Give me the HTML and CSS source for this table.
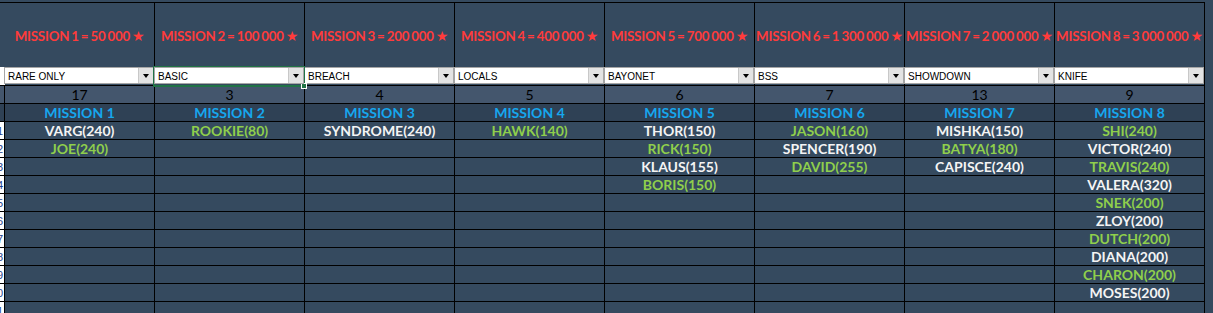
FILE: index.html
```html
<!DOCTYPE html>
<html>
<head>
<meta charset="utf-8">
<link rel="stylesheet" href="styles.css">
</head>
<body>
<div class="sheet">
  <div class="row r-head">
    <div class="rh"></div>
    <div class="cell title">MISSION 1 = 50 000 <span class="star">★</span></div>
    <div class="cell title">MISSION 2 = 100 000 <span class="star">★</span></div>
    <div class="cell title">MISSION 3 = 200 000 <span class="star">★</span></div>
    <div class="cell title">MISSION 4 = 400 000 <span class="star">★</span></div>
    <div class="cell title">MISSION 5 = 700 000 <span class="star">★</span></div>
    <div class="cell title">MISSION 6 = 1 300 000 <span class="star">★</span></div>
    <div class="cell title">MISSION 7 = 2 000 000 <span class="star">★</span></div>
    <div class="cell title">MISSION 8 = 3 000 000 <span class="star">★</span></div>
  </div>
  <div class="row r-drop">
    <div class="rh rh-white"></div>
    <div class="cell"><div class="dd"><span class="dd-text">RARE ONLY</span><span class="dd-btn"></span></div></div>
    <div class="cell selected"><div class="sel"><span class="handle"></span></div><div class="dd"><span class="dd-text">BASIC</span><span class="dd-btn"></span></div></div>
    <div class="cell"><div class="dd"><span class="dd-text">BREACH</span><span class="dd-btn"></span></div></div>
    <div class="cell"><div class="dd"><span class="dd-text">LOCALS</span><span class="dd-btn"></span></div></div>
    <div class="cell"><div class="dd"><span class="dd-text">BAYONET</span><span class="dd-btn"></span></div></div>
    <div class="cell"><div class="dd"><span class="dd-text">BSS</span><span class="dd-btn"></span></div></div>
    <div class="cell"><div class="dd"><span class="dd-text">SHOWDOWN</span><span class="dd-btn"></span></div></div>
    <div class="cell"><div class="dd"><span class="dd-text">KNIFE</span><span class="dd-btn"></span></div></div>
  </div>
  <div class="row r-count">
    <div class="rh"></div>
    <div class="cell">17</div><div class="cell">3</div><div class="cell">4</div><div class="cell">5</div>
    <div class="cell">6</div><div class="cell">7</div><div class="cell">13</div><div class="cell">9</div>
  </div>
  <div class="row r-mission">
    <div class="rh"></div>
    <div class="cell">MISSION 1</div><div class="cell">MISSION 2</div><div class="cell">MISSION 3</div><div class="cell">MISSION 4</div>
    <div class="cell">MISSION 5</div><div class="cell">MISSION 6</div><div class="cell">MISSION 7</div><div class="cell">MISSION 8</div>
  </div>
  <div class="row r-data">
    <div class="rh rh-num"><span>1</span></div>
    <div class="cell w">VARG(240)</div><div class="cell g">ROOKIE(80)</div><div class="cell w">SYNDROME(240)</div><div class="cell g">HAWK(140)</div>
    <div class="cell w">THOR(150)</div><div class="cell g">JASON(160)</div><div class="cell w">MISHKA(150)</div><div class="cell g">SHI(240)</div>
  </div>
  <div class="row r-data">
    <div class="rh rh-num"><span>2</span></div>
    <div class="cell g">JOE(240)</div><div class="cell"></div><div class="cell"></div><div class="cell"></div>
    <div class="cell g">RICK(150)</div><div class="cell w">SPENCER(190)</div><div class="cell g">BATYA(180)</div><div class="cell w">VICTOR(240)</div>
  </div>
  <div class="row r-data">
    <div class="rh rh-num"><span>3</span></div>
    <div class="cell"></div><div class="cell"></div><div class="cell"></div><div class="cell"></div>
    <div class="cell w">KLAUS(155)</div><div class="cell g">DAVID(255)</div><div class="cell w">CAPISCE(240)</div><div class="cell g">TRAVIS(240)</div>
  </div>
  <div class="row r-data">
    <div class="rh rh-num"><span>4</span></div>
    <div class="cell"></div><div class="cell"></div><div class="cell"></div><div class="cell"></div>
    <div class="cell g">BORIS(150)</div><div class="cell"></div><div class="cell"></div><div class="cell w">VALERA(320)</div>
  </div>
  <div class="row r-data">
    <div class="rh rh-num"><span>5</span></div>
    <div class="cell"></div><div class="cell"></div><div class="cell"></div><div class="cell"></div>
    <div class="cell"></div><div class="cell"></div><div class="cell"></div><div class="cell g">SNEK(200)</div>
  </div>
  <div class="row r-data">
    <div class="rh rh-num"><span>6</span></div>
    <div class="cell"></div><div class="cell"></div><div class="cell"></div><div class="cell"></div>
    <div class="cell"></div><div class="cell"></div><div class="cell"></div><div class="cell w">ZLOY(200)</div>
  </div>
  <div class="row r-data">
    <div class="rh rh-num"><span>7</span></div>
    <div class="cell"></div><div class="cell"></div><div class="cell"></div><div class="cell"></div>
    <div class="cell"></div><div class="cell"></div><div class="cell"></div><div class="cell g">DUTCH(200)</div>
  </div>
  <div class="row r-data">
    <div class="rh rh-num"><span>8</span></div>
    <div class="cell"></div><div class="cell"></div><div class="cell"></div><div class="cell"></div>
    <div class="cell"></div><div class="cell"></div><div class="cell"></div><div class="cell w">DIANA(200)</div>
  </div>
  <div class="row r-data">
    <div class="rh rh-num"><span>9</span></div>
    <div class="cell"></div><div class="cell"></div><div class="cell"></div><div class="cell"></div>
    <div class="cell"></div><div class="cell"></div><div class="cell"></div><div class="cell g">CHARON(200)</div>
  </div>
  <div class="row r-data">
    <div class="rh rh-num"><span>0</span></div>
    <div class="cell"></div><div class="cell"></div><div class="cell"></div><div class="cell"></div>
    <div class="cell"></div><div class="cell"></div><div class="cell"></div><div class="cell w">MOSES(200)</div>
  </div>
  <div class="row r-data">
    <div class="rh rh-num"><span>1</span></div>
    <div class="cell"></div><div class="cell"></div><div class="cell"></div><div class="cell"></div>
    <div class="cell"></div><div class="cell"></div><div class="cell"></div><div class="cell"></div>
  </div>
</div>
</body>
</html>
```

FILE: styles.css
```css
* { box-sizing: border-box; }
html, body {
  margin: 0;
  padding: 0;
  background: #354a5f;
  overflow: hidden;
}
body {
  width: 1213px;
  height: 313px;
}
.sheet {
  margin-top: 2px;
  width: 1205px;
  border-top: 1px solid #000;
  font-family: "Lato", "Open Sans", sans-serif;
}
.row {
  display: grid;
  grid-template-columns: 5px repeat(8, 150px);
}
.cell {
  border-right: 1px solid #000;
  display: flex;
  align-items: center;
  justify-content: center;
  white-space: nowrap;
  font-size: 14px;
  overflow: visible;
}
.rh {
  border-right: 1px solid #000;
}
.r-head { height: 64px; }
.r-head .rh { border-right: none; }
.title {
  color: #ff3b3b;
  font-weight: 700;
  font-size: 13.3px;
  letter-spacing: -0.2px;
  word-spacing: -1px;
  padding-top: 1px;
}
.star {
  font-family: "DejaVu Sans", sans-serif;
  font-size: 14px;
  margin-left: 2px;
  line-height: 1;
}
.r-drop { height: 19px; border-bottom: 1px solid #000; }
.r-drop .cell { align-items: flex-start; justify-content: flex-start; position: relative; }
.rh-white { background: #fff; border-right: none; }
.dd {
  position: relative;
  z-index: 2;
  margin-left: -1px;
  width: 150px;
  height: 17px;
  background: #fff;
  border: 1px solid #a6a6a6;
  display: flex;
  align-items: center;
  font-family: "Liberation Sans", Arial, sans-serif;
  font-size: 10px;
  color: #000;
}
.dd-text {
  flex: 1;
  padding-left: 3px;
  padding-top: 1px;
}
.dd-btn {
  width: 15px;
  height: 15px;
  background: #e3e3e3;
  border-left: 1px solid #c8c8c8;
  display: flex;
  align-items: center;
  justify-content: center;
}
.dd-btn::after {
  content: "";
  border-left: 3.5px solid transparent;
  border-right: 3.5px solid transparent;
  border-top: 4px solid #000;
  margin-top: 1px;
}
.sel {
  position: absolute;
  left: -2px;
  top: -1px;
  right: -1px;
  bottom: -2px;
  border: 2px solid #217346;
  z-index: 3;
  pointer-events: none;
}
.selected .dd { z-index: 4; }
.handle {
  position: absolute;
  right: -4px;
  bottom: -4px;
  width: 6px;
  height: 6px;
  background: #217346;
  border: 1px solid #fff;
}
.r-count { height: 18px; background: #44566d; border-bottom: 1px solid #000; }
.r-count .cell { color: #000; font-size: 14px; font-weight: 400; }
.r-mission { height: 18px; background: #2f4155; border-bottom: 1px solid #000; }
.r-mission .cell { color: #16a7ee; font-weight: 700; }
.r-data { height: 18px; border-bottom: 1px solid #000; }
.r-data .cell { font-weight: 700; }
.w { color: #f4f4f4; }
.g { color: #8fcf4c; }
.rh-num {
  background: #fff;
  display: flex;
  justify-content: flex-end;
  align-items: center;
  overflow: hidden;
  font-family: "Liberation Sans", Arial, sans-serif;
  font-size: 11px;
  color: #1e3f8c;
}
.rh-num span { margin-right: 1px; }
```
